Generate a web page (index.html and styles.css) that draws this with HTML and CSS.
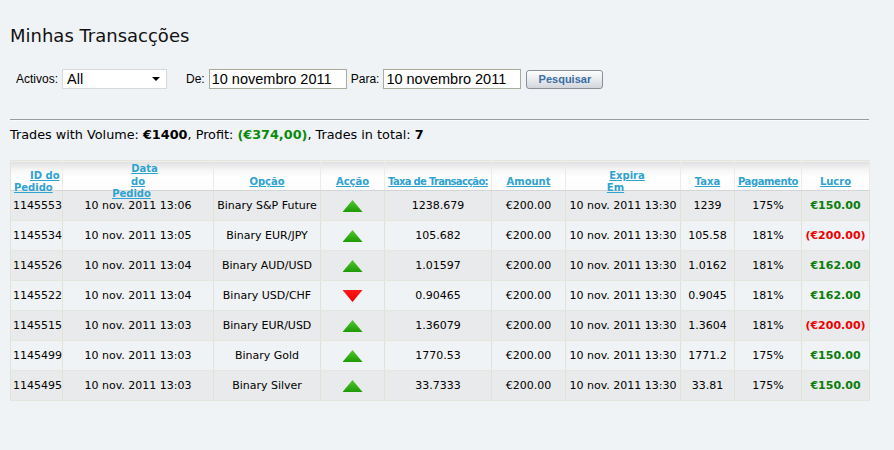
FILE: index.html
```html
<!DOCTYPE html>
<html lang="pt">
<head>
<meta charset="utf-8">
<title>Minhas Transacções</title>
<link rel="stylesheet" href="styles.css">
</head>
<body>
<div class="page">
  <h1 class="title">Minhas Transacções</h1>
  <div class="filters">
    <label class="lbl lbl-act">Activos:</label>
    <div class="select"><span>All</span><span class="caret"></span></div>
    <label class="lbl lbl-de">De:</label>
    <div class="input">10 novembro 2011</div>
    <label class="lbl">Para:</label>
    <div class="input">10 novembro 2011</div>
    <button class="btn">Pesquisar</button>
  </div>
  <div class="rule"></div>
  <p class="summary">Trades with Volume: <b>€1400</b>, Profit: <b class="pos">(€374,00)</b>, Trades in total: <b>7</b></p>
  <table class="grid">
    <colgroup>
      <col style="width:52px"><col style="width:151px"><col style="width:107px"><col style="width:64px"><col style="width:107px"><col style="width:74px"><col style="width:115px"><col style="width:54px"><col style="width:67px"><col style="width:68px">
    </colgroup>
    <thead>
      <tr>
        <th><div class="hd"><div class="stack left"><a class="h-id1">ID do</a><a class="h-id2">Pedido</a></div></div></th>
        <th><div class="hd"><div class="stack"><a class="h-d1">Data</a><a>do</a><a class="h-d3">Pedido</a></div></div></th>
        <th><div class="hd"><a>Opção</a></div></th>
        <th><div class="hd"><a>Acção</a></div></th>
        <th><div class="hd"><a class="tight">Taxa de Transacção:</a></div></th>
        <th><div class="hd"><a>Amount</a></div></th>
        <th><div class="hd"><div class="stack"><a class="h-e1">Expira</a><a class="h-e2">Em</a></div></div></th>
        <th><div class="hd"><a>Taxa</a></div></th>
        <th><div class="hd"><a class="tight2">Pagamento</a></div></th>
        <th><div class="hd"><a>Lucro</a></div></th>
      </tr>
    </thead>
    <tbody>
      <tr><td class="l">1145553</td><td>10 nov. 2011 13:06</td><td>Binary S&amp;P Future</td><td><span class="up"></span></td><td>1238.679</td><td>€200.00</td><td>10 nov. 2011 13:30</td><td>1239</td><td>175%</td><td class="win">€150.00</td></tr>
      <tr><td class="l">1145534</td><td>10 nov. 2011 13:05</td><td>Binary EUR/JPY</td><td><span class="up"></span></td><td>105.682</td><td>€200.00</td><td>10 nov. 2011 13:30</td><td>105.58</td><td>181%</td><td class="loss">(€200.00)</td></tr>
      <tr><td class="l">1145526</td><td>10 nov. 2011 13:04</td><td>Binary AUD/USD</td><td><span class="up"></span></td><td>1.01597</td><td>€200.00</td><td>10 nov. 2011 13:30</td><td>1.0162</td><td>181%</td><td class="win">€162.00</td></tr>
      <tr><td class="l">1145522</td><td>10 nov. 2011 13:04</td><td>Binary USD/CHF</td><td><span class="down"></span></td><td>0.90465</td><td>€200.00</td><td>10 nov. 2011 13:30</td><td>0.9045</td><td>181%</td><td class="win">€162.00</td></tr>
      <tr><td class="l">1145515</td><td>10 nov. 2011 13:03</td><td>Binary EUR/USD</td><td><span class="up"></span></td><td>1.36079</td><td>€200.00</td><td>10 nov. 2011 13:30</td><td>1.3604</td><td>181%</td><td class="loss">(€200.00)</td></tr>
      <tr><td class="l">1145499</td><td>10 nov. 2011 13:03</td><td>Binary Gold</td><td><span class="up"></span></td><td>1770.53</td><td>€200.00</td><td>10 nov. 2011 13:30</td><td>1771.2</td><td>175%</td><td class="win">€150.00</td></tr>
      <tr><td class="l">1145495</td><td>10 nov. 2011 13:03</td><td>Binary Silver</td><td><span class="up"></span></td><td>33.7333</td><td>€200.00</td><td>10 nov. 2011 13:30</td><td>33.81</td><td>175%</td><td class="win">€150.00</td></tr>
    </tbody>
  </table>
</div>
</body>
</html>
```
FILE: styles.css
```css
html, body {
  margin: 0;
  background: #eff3f6;
  font-family: "DejaVu Sans", Verdana, sans-serif;
  color: #000;
}
.page {
  width: 859px;
  padding: 25px 10px 0 10px;
}
.title {
  margin: 0;
  font-size: 18px;
  line-height: 22px;
  font-weight: normal;
  color: #111;
}
.filters {
  display: flex;
  align-items: center;
  margin-top: 22px;
  padding-left: 6px;
  height: 20px;
  font-family: "Liberation Sans", Arial, sans-serif;
}
.lbl {
  font-size: 12px;
  color: #000;
  margin-right: 4px;
}
.lbl-act { margin-right: 4px; }
.lbl-de { margin-left: 19px; margin-right: 4px; }
.select {
  box-sizing: border-box;
  width: 105px;
  height: 20px;
  background: #fff;
  border: 1px solid #d6d9dc;
  display: flex;
  align-items: center;
  justify-content: space-between;
  padding: 0 6px 0 4px;
  font-size: 14.5px;
}
.caret {
  width: 0; height: 0;
  border-left: 4px solid transparent;
  border-right: 4px solid transparent;
  border-top: 4px solid #000;
}
.input {
  box-sizing: border-box;
  width: 138px;
  height: 20px;
  background: #fff;
  border: 1px solid #a9ab9d;
  padding: 0 2px;
  font-size: 14.5px;
  line-height: 18px;
  margin-right: 4px;
}
.btn {
  box-sizing: border-box;
  width: 77px;
  height: 19px;
  margin-left: 1px;
  border: 1px solid #8c9096;
  border-radius: 3px;
  background: linear-gradient(#fdfdfd, #e9ebee 50%, #d2d6db);
  font-family: "Liberation Sans", Arial, sans-serif;
  font-weight: bold;
  font-size: 11px;
  color: #3b6ea3;
  padding: 0;
}
.rule {
  margin-top: 30px;
  height: 0;
  border-top: 1px solid #9a9a9a;
  border-bottom: 1px solid #f8fafb;
}
.summary {
  margin: 7px 0 0 0;
  font-size: 12.8px;
  line-height: 14px;
}
.summary .pos { color: #0a8a0a; }
.grid {
  margin-top: 18px;
  width: 859px;
  table-layout: fixed;
  border-collapse: collapse;
  font-size: 11px;
  border-top: 1px solid #e4e6dc;
  border-left: 1px solid #e2e4d8;
}
.grid th {
  height: 30px;
  box-sizing: border-box;
  padding: 0;
  vertical-align: top;
  border-right: 1px solid #ecece4;
  border-bottom: 1px solid #d3d5d6;
  background: linear-gradient(#dedfe0, #f6f6f6 30%, #ffffff 55%, #fbfbfb);
}
.hd {
  height: 29px;
  box-sizing: border-box;
  padding-top: 13px;
  display: flex;
  align-items: center;
  justify-content: center;
  font-size: 10px;
  line-height: 12.5px;
  font-weight: bold;
  white-space: nowrap;
}
.hd a {
  color: #2ea2d0;
  text-decoration: underline;
}
.stack {
  display: flex;
  flex-direction: column;
  align-items: center;
  width: 100%;
}
.stack.left { align-items: flex-start; }
.h-id1 { margin-left: 19px; }
.h-id2 { margin-left: 3px; }
.h-d1 { margin-left: 13px; }
.h-d3 { margin-right: 13px; }
.h-e1 { margin-left: 8px; }
.h-e2 { margin-right: 15px; }
.tight { letter-spacing: -0.7px; }
.tight2 { letter-spacing: -0.4px; }
.grid td {
  height: 30px;
  box-sizing: border-box;
  padding: 0 1px;
  text-align: center;
  white-space: nowrap;
  border-right: 1px solid #e2e3d6;
  border-bottom: 1px solid #e6e7dc;
}
.grid tbody tr:nth-child(odd) td { background: #e8eaeb; }
.grid tbody tr:nth-child(even) td { background: #f0f3f5; }
.grid td.l { text-align: left; padding-left: 2px; }
.grid td.win { color: #0a7d0a; font-weight: bold; }
.grid td.loss { color: #ee0000; font-weight: bold; }
.up, .down {
  display: inline-block;
  width: 20px;
  height: 12px;
  vertical-align: middle;
}
.up {
  background: linear-gradient(#55c630, #1d9a06);
  clip-path: polygon(50% 0, 100% 100%, 0 100%);
}
.down {
  background: linear-gradient(#ff1a1a, #e80000);
  clip-path: polygon(0 0, 100% 0, 50% 100%);
}
```
